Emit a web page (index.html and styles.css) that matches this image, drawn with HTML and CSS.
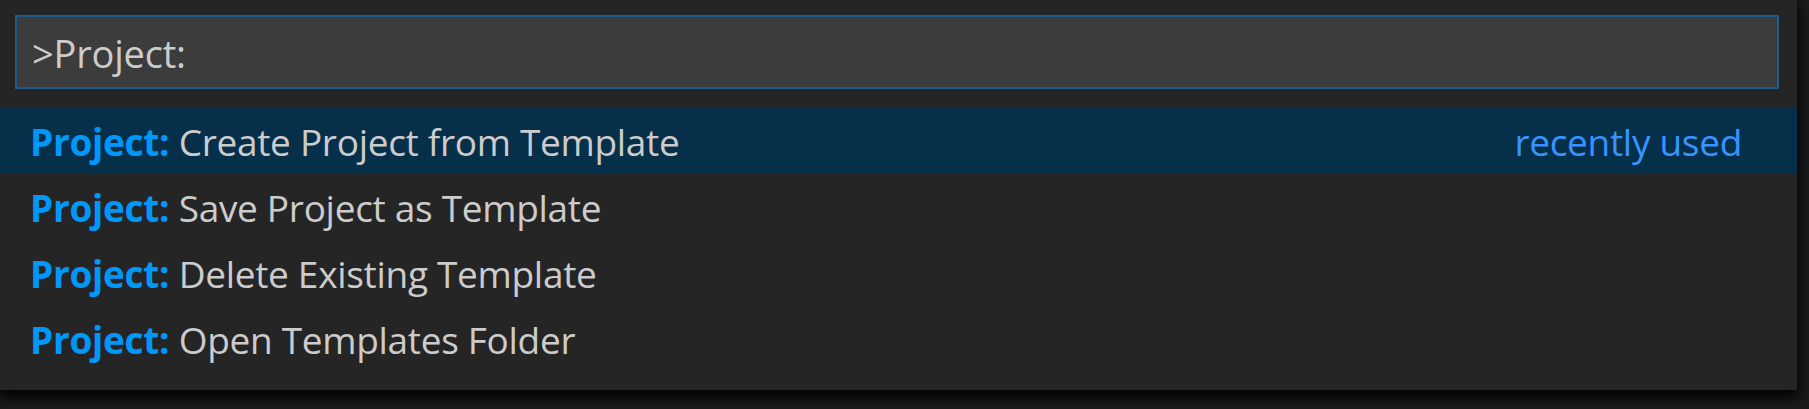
FILE: index.html
```html
<!DOCTYPE html>
<html>
<head>
<meta charset="utf-8">
<link rel="stylesheet" href="styles.css">
</head>
<body>
<div class="picker">
  <div class="input"><span class="input-text">&gt;Project:</span></div>
  <div class="list">
    <div class="row selected">
      <span class="label"><b class="hl">Project:</b> Create Project from Template</span>
      <span class="group">recently used</span>
    </div>
    <div class="row">
      <span class="label"><b class="hl">Project:</b> Save Project as Template</span>
    </div>
    <div class="row">
      <span class="label"><b class="hl">Project:</b> Delete Existing Template</span>
    </div>
    <div class="row">
      <span class="label"><b class="hl">Project:</b> Open Templates Folder</span>
    </div>
  </div>
</div>
</body>
</html>
```
FILE: styles.css
```css
html, body {
  margin: 0;
  padding: 0;
  background: #1c1c1c;
  width: 1809px;
  height: 409px;
  overflow: hidden;
}
.picker {
  width: 1797px;
  height: 390px;
  box-sizing: border-box;
  background: #252526;
  padding-top: 15px;
  box-shadow: 0 6px 14px 2px #000;
  font-family: "Open Sans", "Noto Sans", sans-serif;
  font-size: 37px;
  letter-spacing: -0.3px;
  color: #cccccc;
}
.input {
  margin: 0 18px 0 15px;
  height: 74px;
  box-sizing: border-box;
  border: 2px solid #1b5e8d;
  background: #3c3c3c;
  padding: 5px 0 0 15px;
  line-height: 63px;
  font-size: 38px;
  letter-spacing: -0.2px;
}
.input-text {
  color: #cccccc;
}
.list {
  margin-top: 18px;
}
.row {
  height: 66px;
  box-sizing: border-box;
  padding: 4px 55px 0 30px;
  line-height: 62px;
  display: flex;
  justify-content: space-between;
  white-space: nowrap;
}
.row.selected {
  background: #062f4a;
}
.hl {
  color: #0097fb;
  font-weight: 700;
}
.group {
  color: #3794ff;
}
```
